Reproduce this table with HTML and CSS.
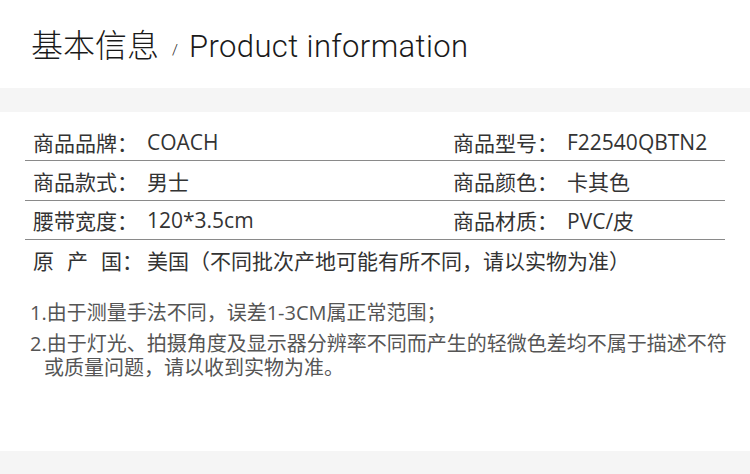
FILE: index.html
```html
<!DOCTYPE html>
<html lang="zh-CN">
<head>
<meta charset="utf-8">
<title>基本信息</title>
<link rel="stylesheet" href="styles.css">
</head>
<body>
<header class="head">
  <h1 class="title"><span class="title-cn">基本信息</span><span class="slash">/</span><span class="title-en">Product information</span></h1>
</header>
<div class="band"></div>
<section class="info">
  <div class="table">
    <div class="row">
      <div class="cell"><span class="label">商品品牌：</span><span class="value">COACH</span></div>
      <div class="cell"><span class="label">商品型号：</span><span class="value">F22540QBTN2</span></div>
    </div>
    <div class="row">
      <div class="cell"><span class="label">商品款式：</span><span class="value">男士</span></div>
      <div class="cell"><span class="label">商品颜色：</span><span class="value">卡其色</span></div>
    </div>
    <div class="row">
      <div class="cell"><span class="label">腰带宽度：</span><span class="value">120*3.5cm</span></div>
      <div class="cell"><span class="label">商品材质：</span><span class="value">PVC/皮</span></div>
    </div>
    <div class="row row-full">
      <div class="cell"><span class="label"><span class="spaced">原产</span>国：</span><span class="value">美国（不同批次产地可能有所不同，请以实物为准）</span></div>
    </div>
  </div>
  <div class="notes">
    <p class="note">1.由于测量手法不同，误差1-3CM属正常范围；</p>
    <p class="note">2.由于灯光、拍摄角度及显示器分辨率不同而产生的轻微色差均不属于描述不符或质量问题，请以收到实物为准。</p>
  </div>
</section>
<div class="band band-bottom"></div>
</body>
</html>
```

FILE: styles.css
```css
html, body {
  margin: 0;
  padding: 0;
  background: #ffffff;
}

body {
  width: 750px;
  font-family: "Open Sans", "Noto Sans CJK SC", sans-serif;
  color: #333333;
}

.head {
  height: 88px;
  box-sizing: border-box;
  padding: 24px 0 0 31px;
}

.title {
  margin: 0;
  font-weight: 300;
  line-height: 38px;
  display: flex;
  align-items: baseline;
  color: #1a1a1a;
}

.title-cn {
  font-family: "Noto Sans CJK SC", sans-serif;
  font-size: 32px;
  font-weight: 300;
}

.slash {
  font-family: "Roboto", sans-serif;
  font-size: 15px;
  font-weight: 300;
  margin: 0 11px 0 13px;
  position: relative;
  top: -2px;
}

.title-en {
  font-family: "Roboto", sans-serif;
  font-size: 31px;
  font-weight: 300;
  letter-spacing: 0.4px;
}

.band {
  height: 24px;
  background: #f5f5f5;
}

.band-bottom {
  height: 23px;
}

.info {
  height: 339px;
  box-sizing: border-box;
  padding-top: 9px;
}

.table {
  margin: 0 25px;
}

.row {
  display: grid;
  grid-template-columns: 420px 1fr;
  height: 39px;
  padding-left: 8px;
  border-bottom: 1px solid #8a8a8a;
  font-size: 21px;
  align-items: center;
}

.row:first-child {
  height: 37px;
  padding-top: 2px;
}

.row:nth-child(3) {
  height: 38px;
}

.row-full {
  grid-template-columns: 1fr;
  border-bottom: none;
}

.cell {
  display: flex;
  align-items: center;
  white-space: nowrap;
}

.label {
  width: 114px;
  flex: none;
}

.spaced {
  letter-spacing: 13px;
}

.notes {
  margin-top: 22px;
  padding-left: 30px;
  padding-right: 20px;
  color: #555555;
  font-size: 20px;
  line-height: 24px;
}

.note {
  margin: 0 0 7px 0;
  padding-left: 14px;
  text-indent: -14px;
}
```
